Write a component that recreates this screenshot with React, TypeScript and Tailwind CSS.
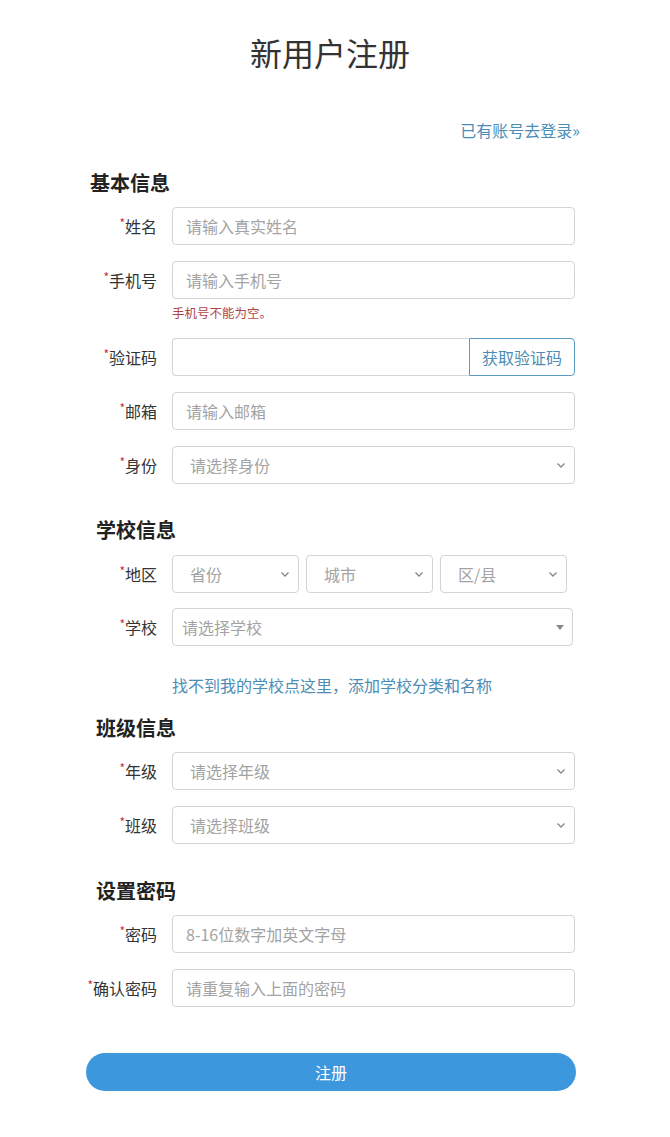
import React from "react";

const font = {
  fontFamily: '"Noto Sans CJK SC", "Liberation Sans", sans-serif',
};

function Chevron() {
  return (
    <svg width="10" height="7" viewBox="0 0 10 7" className="shrink-0">
      <path d="M1.5 1.5 L5 5 L8.5 1.5" fill="none" stroke="#8a8a8a" strokeWidth="1.4" />
    </svg>
  );
}

function Label({ text }: { text: string }) {
  return (
    <div className="w-[86px] shrink-0 pr-[15px] text-right text-[16px] text-[#333]">
      <span className="text-[12px] text-[#c9302c] align-top">*</span>
      {text}
    </div>
  );
}

function TextInput({ placeholder }: { placeholder?: string }) {
  return (
    <input
      placeholder={placeholder}
      className="h-[38px] w-full rounded-[4px] border border-[#d4d4d4] bg-white px-[13px] text-[16px] text-[#333] outline-none placeholder:text-[#a3a3a3]"
    />
  );
}

function FakeSelect({ text, className = "" }: { text: string; className?: string }) {
  return (
    <div
      className={
        "flex h-[38px] items-center justify-between rounded-[4px] border border-[#d4d4d4] bg-white pl-[17px] pr-[8px] text-[16px] text-[#a3a3a3] " +
        className
      }
    >
      <span>{text}</span>
      <Chevron />
    </div>
  );
}

function Row({ label, children, className = "" }: { label: string; children: React.ReactNode; className?: string }) {
  return (
    <div className={"flex items-center " + className}>
      <Label text={label} />
      {children}
    </div>
  );
}

function Heading({ text, className = "" }: { text: string; className?: string }) {
  return <h2 className={"text-[20px] font-bold leading-[28px] text-[#222] " + className}>{text}</h2>;
}

export default function App() {
  return (
    <div className="min-h-[1137px] w-[670px] bg-white" style={font}>
      <h1 className="pt-[30px] pr-[10px] text-center text-[32px] leading-[44px] text-[#333]">新用户注册</h1>

      <div className="ml-[86px] w-[490px] pb-[46px]">
        <div className="mt-[46px] flex justify-end">
          <a className="mr-[-4px] text-[16px] leading-[20px] text-[#4c8db5]">已有账号去登录»</a>
        </div>

        <Heading text="基本信息" className="mt-[29px] ml-[4px]" />
        <Row label="姓名" className="mt-[10px] pr-[1px]">
          <TextInput placeholder="请输入真实姓名" />
        </Row>
        <Row label="手机号" className="mt-[16px] pr-[1px]">
          <TextInput placeholder="请输入手机号" />
        </Row>
        <div className="ml-[86px] mt-[6px] text-[12.5px] leading-[16px] text-[#b04444]">手机号不能为空。</div>
        <Row label="验证码" className="mt-[17px] pr-[1px]">
          <div className="flex w-full">
            <input className="h-[38px] min-w-0 flex-1 rounded-l-[4px] border border-r-0 border-[#d4d4d4] bg-white px-[13px] text-[16px] outline-none" />
            <button className="h-[38px] w-[106px] rounded-r-[4px] border border-[#5b9bc2] bg-white text-[16px] text-[#4c8db5]">
              获取验证码
            </button>
          </div>
        </Row>
        <Row label="邮箱" className="mt-[16px] pr-[1px]">
          <TextInput placeholder="请输入邮箱" />
        </Row>
        <Row label="身份" className="mt-[16px] pr-[1px]">
          <FakeSelect text="请选择身份" className="w-full" />
        </Row>

        <Heading text="学校信息" className="mt-[32px] ml-[10px]" />
        <Row label="地区" className="mt-[11px]">
          <div className="flex gap-[7px]">
            <FakeSelect text="省份" className="w-[127px]" />
            <FakeSelect text="城市" className="w-[127px]" />
            <FakeSelect text="区/县" className="w-[127px]" />
          </div>
        </Row>
        <Row label="学校" className="mt-[15px] pr-[3px]">
          <div className="flex h-[38px] w-full items-center justify-between rounded-[4px] border border-[#d4d4d4] bg-white pl-[9px] pr-[8px] text-[16px] text-[#a3a3a3]">
            <span>请选择学校</span>
            <svg width="8" height="5" viewBox="0 0 8 5">
              <path d="M0 0 L8 0 L4 5 Z" fill="#8a8a8a" />
            </svg>
          </div>
        </Row>
        <div className="ml-[86px] mt-[29px] text-[16px] leading-[20px] text-[#4c8db5]">
          找不到我的学校点这里，添加学校分类和名称
        </div>

        <Heading text="班级信息" className="mt-[19px] ml-[10px]" />
        <Row label="年级" className="mt-[10px] pr-[1px]">
          <FakeSelect text="请选择年级" className="w-full" />
        </Row>
        <Row label="班级" className="mt-[16px] pr-[1px]">
          <FakeSelect text="请选择班级" className="w-full" />
        </Row>

        <Heading text="设置密码" className="mt-[33px] ml-[10px]" />
        <Row label="密码" className="mt-[10px] pr-[1px]">
          <TextInput placeholder="8-16位数字加英文字母" />
        </Row>
        <Row label="确认密码" className="mt-[16px] pr-[1px]">
          <TextInput placeholder="请重复输入上面的密码" />
        </Row>

        <button className="mt-[46px] h-[38px] w-full rounded-full bg-[#3c97dc] text-[16px] text-white">注册</button>
      </div>
    </div>
  );
}
